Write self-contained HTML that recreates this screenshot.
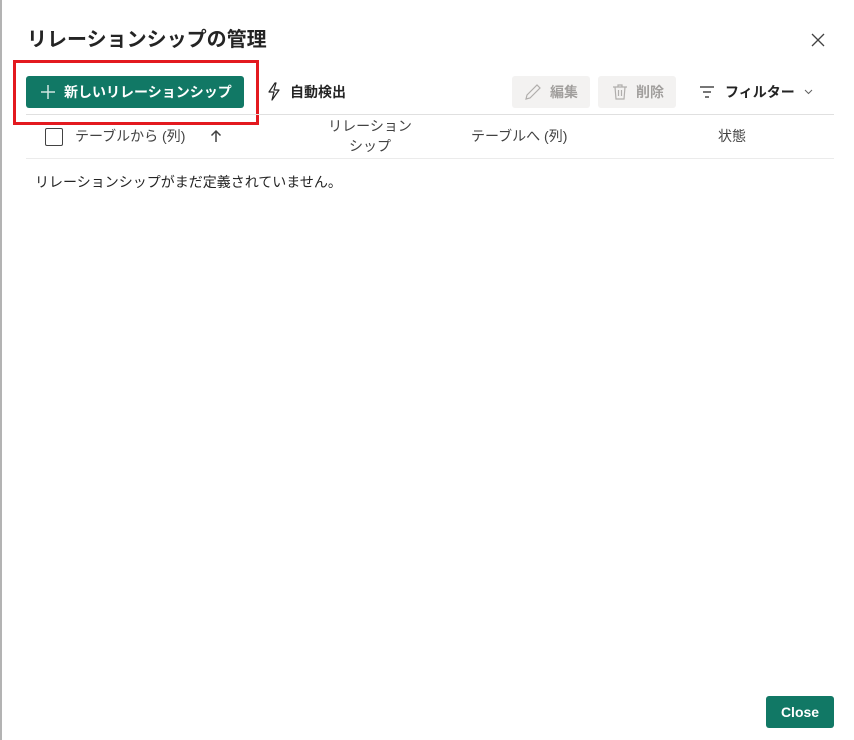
<!DOCTYPE html>
<html><head><meta charset="utf-8"><style>
*{margin:0;padding:0;box-sizing:border-box}
body{width:854px;height:740px;background:#fff;position:relative;overflow:hidden;font-family:"Liberation Sans","Noto Sans CJK JP",sans-serif;color:#242424}
.a{position:absolute;white-space:nowrap}
</style></head><body>
<div class="a" style="left:0;top:0;width:2px;height:740px;background:#b3b3b3"></div>
<div class="a" style="left:27px;top:26px;font-size:20px;font-weight:bold;line-height:28px">リレーションシップの管理</div>
<svg class="a" style="left:811px;top:33px" width="14" height="14"><path d="M1 1L13 13M13 1L1 13" stroke="#424242" stroke-width="1.3"/></svg>
<div class="a" style="left:13px;top:60px;width:246px;height:65px;border:3px solid #e3191f"></div>
<div class="a" style="left:26px;top:76px;width:218px;height:32px;background:#117865;border-radius:3px;color:#fff;font-size:14px;font-weight:bold;line-height:32px;padding-left:38px">新しいリレーションシップ</div>
<svg class="a" style="left:40px;top:84px" width="16" height="16"><path d="M8 1V15M1 8H15" stroke="#d0e6e1" stroke-width="1.5"/></svg>
<svg class="a" style="left:266px;top:82px" width="16" height="20"><path d="M9 1L3 10H8L6 18L13 8H8L10 1Z" fill="none" stroke="#242424" stroke-width="1.2" stroke-linejoin="round"/></svg>
<div class="a" style="left:290px;top:82px;font-size:14px;font-weight:bold;line-height:20px">自動検出</div>
<div class="a" style="left:512px;top:76px;width:78px;height:32px;background:#f3f2f1;border-radius:3px;color:#a19f9d;font-size:14px;font-weight:bold;line-height:32px;padding-left:38px">編集</div>
<svg class="a" style="left:524px;top:83px" width="18" height="18"><path d="M2 16L3 12L13 2L16 5L6 15Z" fill="none" stroke="#b0aeac" stroke-width="1.2"/></svg>
<div class="a" style="left:598px;top:76px;width:78px;height:32px;background:#f3f2f1;border-radius:3px;color:#a19f9d;font-size:14px;font-weight:bold;line-height:32px;padding-left:38px">削除</div>
<svg class="a" style="left:611px;top:83px" width="18" height="18"><path d="M2 4H16M7 4V2H11V4M4 4L5 16H13L14 4M7.5 7V13M10.5 7V13" fill="none" stroke="#b0aeac" stroke-width="1.2"/></svg>
<svg class="a" style="left:699px;top:85px" width="16" height="14"><path d="M1 2H15M4 7H12M6 12H10" stroke="#242424" stroke-width="1.2"/></svg>
<div class="a" style="left:725px;top:82px;font-size:14px;font-weight:bold;line-height:20px">フィルター</div>
<svg class="a" style="left:804px;top:89px" width="9" height="6"><path d="M1 1L4.5 4.5L8 1" fill="none" stroke="#616161" stroke-width="1"/></svg>
<div class="a" style="left:26px;top:114px;width:808px;height:1px;background:#e0e0e0"></div>
<div class="a" style="left:26px;top:158px;width:808px;height:1px;background:#ebebeb"></div>
<div class="a" style="left:45px;top:128px;width:18px;height:18px;border:1px solid #424242;border-radius:2px"></div>
<div class="a" style="left:75px;top:126px;font-size:14px;line-height:20px;color:#424242">テーブルから (列)</div>
<svg class="a" style="left:210px;top:129px" width="12" height="14"><path d="M6 13V2M1.5 6.5L6 2L10.5 6.5" fill="none" stroke="#424242" stroke-width="1.5"/></svg>
<div class="a" style="left:320px;top:116px;width:100px;text-align:center;font-size:14px;line-height:20px;color:#424242">リレーション<br>シップ</div>
<div class="a" style="left:471px;top:126px;font-size:14px;line-height:20px;color:#424242">テーブルへ (列)</div>
<div class="a" style="left:718px;top:126px;font-size:14px;line-height:20px;color:#424242">状態</div>
<div class="a" style="left:35px;top:172px;font-size:14px;line-height:20px;color:#242424">リレーションシップがまだ定義されていません。</div>
<div class="a" style="left:766px;top:696px;width:68px;height:32px;background:#117865;border-radius:3px;color:#fff;font-size:14px;font-weight:bold;line-height:32px;text-align:center">Close</div>
</body></html>
